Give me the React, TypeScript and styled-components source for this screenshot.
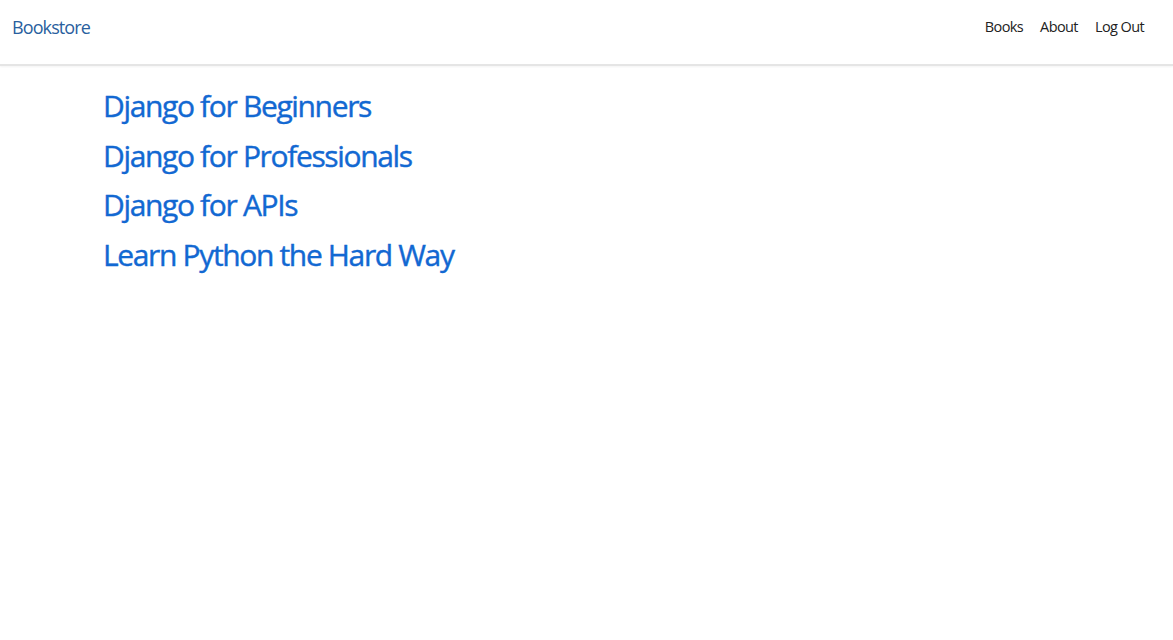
import React from "react";
import styled, { createGlobalStyle } from "styled-components";

const Global = createGlobalStyle`
  html, body { margin: 0; padding: 0; background: #fff; }
  body { font-family: "Open Sans", "Noto Sans", sans-serif; }
  * { box-sizing: border-box; }
`;

const Navbar = styled.nav`
  height: 66px;
  display: flex;
  align-items: center;
  justify-content: space-between;
  padding: 0 29px 0 12px;
  border-bottom: 2px solid #e5e5e5;
  box-shadow: 0 1px 2px rgba(0,0,0,0.05);
`;

const Brand = styled.a`
  font-size: 18px;
  color: #2a5f9e;
  text-decoration: none;
  letter-spacing: -0.9px;
  margin-top: -10px;
`;

const NavList = styled.div`
  display: flex;
  gap: 17px;
  margin-top: -12px;
`;

const NavLink = styled.a`
  font-size: 14.5px;
  color: #222;
  text-decoration: none;
  letter-spacing: -0.6px;
`;

const Main = styled.main`
  padding: 15px 0 0 103px;
  display: flex;
  flex-direction: column;
`;

const BookLink = styled.a`
  font-size: 30px;
  line-height: 49.5px;
  color: #1268d2;
  text-decoration: none;
  letter-spacing: -1.35px;
  -webkit-text-stroke: 0.4px #1268d2;
  width: max-content;
`;

const books = [
  "Django for Beginners",
  "Django for Professionals",
  "Django for APIs",
  "Learn Python the Hard Way",
];

export default function App() {
  return (
    <>
      <Global />
      <Navbar>
        <Brand href="#">Bookstore</Brand>
        <NavList>
          <NavLink href="#">Books</NavLink>
          <NavLink href="#">About</NavLink>
          <NavLink href="#">Log Out</NavLink>
        </NavList>
      </Navbar>
      <Main>
        {books.map((b) => (
          <BookLink key={b} href="#">{b}</BookLink>
        ))}
      </Main>
    </>
  );
}
